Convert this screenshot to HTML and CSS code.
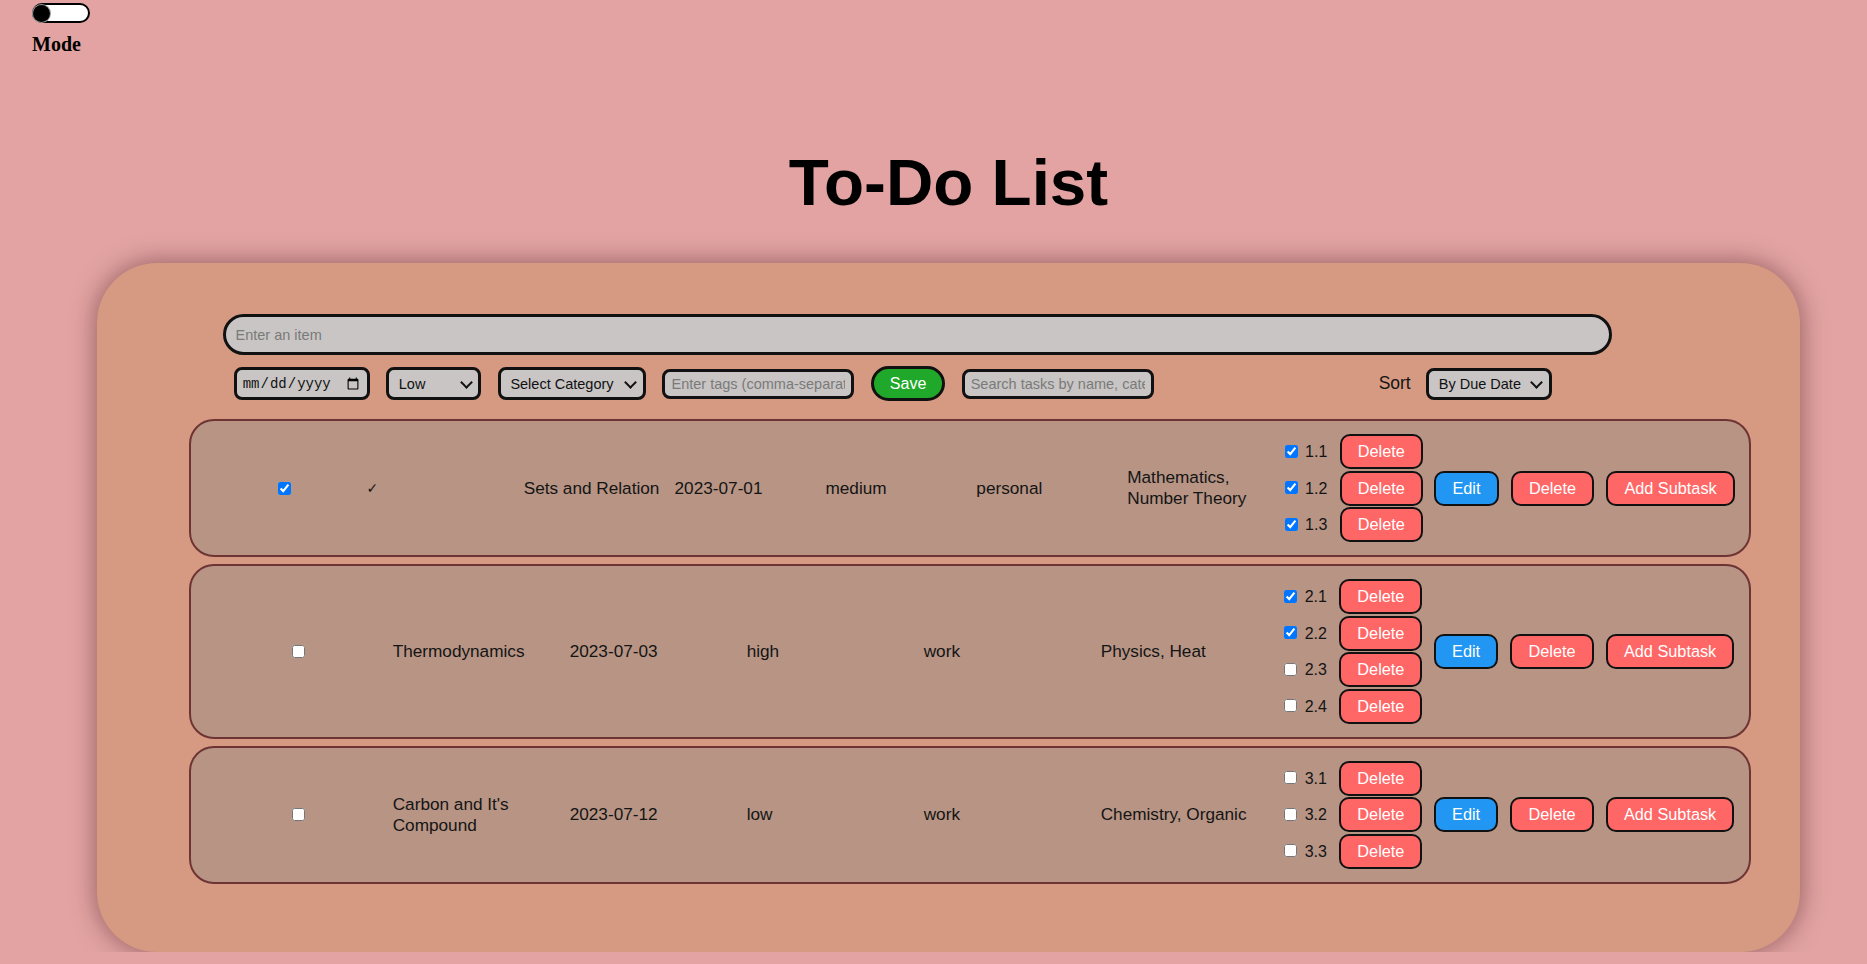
FILE: index.html
```html
<!DOCTYPE html>
<html lang="en">
<head>
<meta charset="utf-8">
<title>To-Do List</title>
<link rel="stylesheet" href="styles.css">
</head>
<body>
<header class="mode">
  <label class="switch"><input type="checkbox" class="switch-input"><span class="knob"></span></label>
  <div class="mode-label">Mode</div>
</header>
<main class="page">
  <h1 class="title">To-Do List</h1>
  <section class="card">
    <input class="entry" type="text" placeholder="Enter an item">
    <div class="controls">
      <input class="ctl date" type="date">
      <span class="select sel-priority"><select class="ctl"><option>Low</option><option>Medium</option><option>High</option></select></span>
      <span class="select sel-category"><select class="ctl"><option>Select Category</option><option>Work</option><option>Personal</option></select></span>
      <input class="ctl txt" type="text" placeholder="Enter tags (comma-separated)">
      <button class="save">Save</button>
      <input class="ctl txt" type="text" placeholder="Search tasks by name, category, or tags">
      <span class="sort-label">Sort</span>
      <span class="select sel-sort"><select class="ctl"><option>By Due Date</option><option>By Priority</option></select></span>
    </div>
    <ul class="list">
      <li class="todo todo--done">
        <div class="c-check"><input type="checkbox" checked></div>
        <div class="c-mark">✓</div>
        <div class="c-text">Sets and Relation</div>
        <div class="c-text">2023-07-01</div>
        <div class="c-text">medium</div>
        <div class="c-text">personal</div>
        <div class="c-text">Mathematics, Number Theory</div>
        <div class="subtasks">
          <div class="sub"><input type="checkbox" checked> <span class="sub-label">1.1</span> <button class="btn">Delete</button></div>
          <div class="sub"><input type="checkbox" checked> <span class="sub-label">1.2</span> <button class="btn">Delete</button></div>
          <div class="sub"><input type="checkbox" checked> <span class="sub-label">1.3</span> <button class="btn">Delete</button></div>
        </div>
        <div class="actions">
          <button class="btn btn--edit">Edit</button>
          <button class="btn">Delete</button>
          <button class="btn">Add Subtask</button>
        </div>
      </li>
      <li class="todo">
        <div class="c-check"><input type="checkbox"></div>
        <div class="c-text">Thermodynamics</div>
        <div class="c-text">2023-07-03</div>
        <div class="c-text">high</div>
        <div class="c-text">work</div>
        <div class="c-text">Physics, Heat</div>
        <div class="subtasks">
          <div class="sub"><input type="checkbox" checked> <span class="sub-label">2.1</span> <button class="btn">Delete</button></div>
          <div class="sub"><input type="checkbox" checked> <span class="sub-label">2.2</span> <button class="btn">Delete</button></div>
          <div class="sub"><input type="checkbox"> <span class="sub-label">2.3</span> <button class="btn">Delete</button></div>
          <div class="sub"><input type="checkbox"> <span class="sub-label">2.4</span> <button class="btn">Delete</button></div>
        </div>
        <div class="actions">
          <button class="btn btn--edit">Edit</button>
          <button class="btn">Delete</button>
          <button class="btn">Add Subtask</button>
        </div>
      </li>
      <li class="todo">
        <div class="c-check"><input type="checkbox"></div>
        <div class="c-text">Carbon and It's Compound</div>
        <div class="c-text">2023-07-12</div>
        <div class="c-text">low</div>
        <div class="c-text">work</div>
        <div class="c-text">Chemistry, Organic</div>
        <div class="subtasks">
          <div class="sub"><input type="checkbox"> <span class="sub-label">3.1</span> <button class="btn">Delete</button></div>
          <div class="sub"><input type="checkbox"> <span class="sub-label">3.2</span> <button class="btn">Delete</button></div>
          <div class="sub"><input type="checkbox"> <span class="sub-label">3.3</span> <button class="btn">Delete</button></div>
        </div>
        <div class="actions">
          <button class="btn btn--edit">Edit</button>
          <button class="btn">Delete</button>
          <button class="btn">Add Subtask</button>
        </div>
      </li>
    </ul>
  </section>
</main>
</body>
</html>
```
FILE: styles.css
```css
* { box-sizing: border-box; }

body {
  margin: 0;
  background: #e3a3a3;
  font-family: "Liberation Sans", Arial, sans-serif;
  color: #141414;
}

/* mode toggle */
.mode {
  height: 57px;
  padding: 3px 0 0 32px;
}
.switch {
  display: block;
  position: relative;
  width: 58px;
  height: 20px;
  border: 2px solid #000;
  border-radius: 10px;
  background: #fff;
}
.switch-input { display: none; }
.knob {
  position: absolute;
  left: -1px;
  top: 50%;
  width: 17px;
  height: 17px;
  margin-top: -8.5px;
  border-radius: 50%;
  background: #000;
  box-shadow: 0 0 0 1px #9a9a9a;
}
.mode-label {
  margin-top: 10px;
  font: bold 20px/23px "Liberation Serif", "Times New Roman", serif;
  color: #000;
}

/* page */
.page { padding-left: 30px; }
.title {
  margin: 88px 0 0;
  text-align: center;
  font-size: 65.6px;
  line-height: 75px;
  font-weight: bold;
  color: #000;
}
.card {
  width: 1703px;
  margin: 43.4px auto 0;
  padding: 51px 0 68px;
  background: #d69a82;
  border-radius: 60px;
  box-shadow: 0 0 26px rgba(60, 20, 20, 0.5);
}

/* inputs */
.entry {
  display: block;
  margin-left: 126px;
  width: 1389px;
  height: 41px;
  border: 3px solid #111;
  border-radius: 21px;
  background: #c8c5c4;
  padding: 0 9.5px;
  font: 14.5px "Liberation Sans", Arial, sans-serif;
  color: #111;
  outline: none;
}
.entry::placeholder,
.txt::placeholder { color: #7a7a7a; }

.controls {
  display: flex;
  align-items: center;
  gap: 16.6px;
  height: 35px;
  margin: 11px 0 0 136.7px;
}
.ctl {
  flex: none;
  height: 33px;
  border: 3px solid #111;
  border-radius: 8px;
  background: #c8c5c4;
  font: 14.5px "Liberation Sans", Arial, sans-serif;
  color: #111;
  padding: 0 6px;
  outline: none;
}
.date {
  width: 136px;
  padding: 0 5px;
  font-family: "Liberation Mono", monospace;
  font-size: 14px;
}

/* selects with chevron */
.select {
  flex: none;
  position: relative;
  display: block;
}
.select select {
  -webkit-appearance: none;
  appearance: none;
  width: 100%;
  padding: 0 24px 0 9.5px;
}
.select::after {
  content: "";
  position: absolute;
  right: 10.5px;
  top: 50%;
  width: 7px;
  height: 7px;
  margin-top: -6px;
  border-right: 2.5px solid #111;
  border-bottom: 2.5px solid #111;
  transform: rotate(45deg);
  pointer-events: none;
}
.sel-priority { width: 95px; }
.sel-category { width: 148px; }
.sel-sort { width: 126px; margin-left: -1.6px; }
.sel-sort select { height: 32px; padding-left: 10px; }

.txt { width: 192px; height: 30px; }
.save {
  flex: none;
  width: 74px;
  height: 35px;
  padding: 0;
  border: 3px solid #111;
  border-radius: 18px;
  background: #20a82a;
  color: #fff;
  font: 16px "Liberation Sans", Arial, sans-serif;
}
.sort-label {
  margin-left: 208.4px;
  font-size: 17.5px;
}

/* list */
.list {
  list-style: none;
  margin: 18px 0 0 91.7px;
  padding: 0;
  width: 1562px;
  display: flex;
  flex-direction: column;
  gap: 7px;
}
.todo {
  display: flex;
  align-items: center;
  padding: 13px 0;
  border: 2px solid #6e3434;
  border-radius: 25px;
  background: #b79484;
  font-size: 17.2px;
  line-height: 21px;
}
.c-check {
  flex: none;
  width: 202px;
  padding-left: 12.8px;
  display: flex;
  justify-content: center;
}
.c-check input { margin: 0; }
.todo--done .c-check { width: 175.7px; }
.c-mark {
  flex: none;
  width: 157.3px;
  font-family: "DejaVu Sans", sans-serif;
  font-size: 14px;
}
.c-text {
  flex: none;
  width: 177px;
  padding-right: 8px;
}
.todo--done .c-text { width: 150.9px; }

.subtasks {
  flex: none;
  margin-left: 2.5px;
  display: flex;
  flex-direction: column;
  gap: 1.5px;
  font-size: 16px;
  line-height: normal;
}
.sub { white-space: nowrap; }
.sub input { vertical-align: -0.5px; }
.sub-label { margin-right: 8px; }

.actions {
  flex: none;
  display: flex;
  gap: 12.4px;
  margin-left: 11.6px;
}
.btn {
  height: 35px;
  padding: 0 16px;
  border: 2px solid #111;
  border-radius: 10px;
  background: #ff6666;
  color: #fff;
  font: 16.3px/19px "Liberation Sans", Arial, sans-serif;
}
.btn--edit { background: #2196f3; }
```
